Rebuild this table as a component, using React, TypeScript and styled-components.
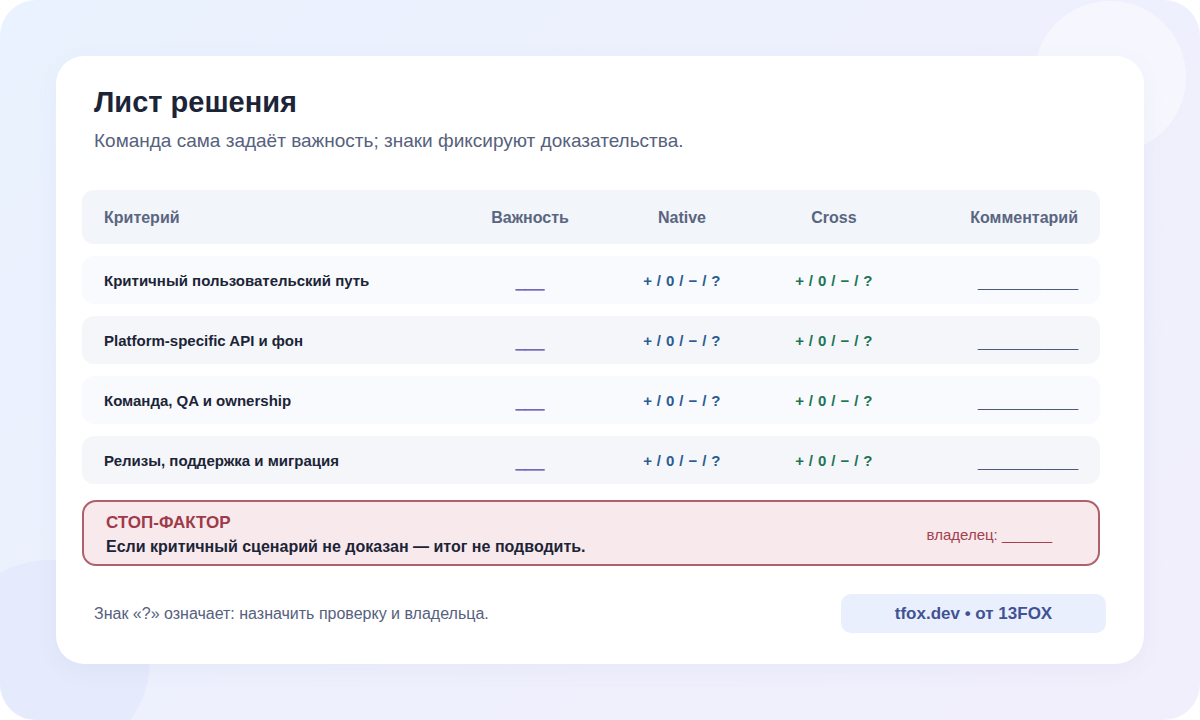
import React from "react";
import styled, { createGlobalStyle } from "styled-components";

const Global = createGlobalStyle`
  html, body { margin: 0; padding: 0; background: #ffffff; }
  body { font-family: "Liberation Sans", Arial, sans-serif; }
  * { box-sizing: border-box; }
`;

const Frame = styled.div`
  position: relative;
  width: 1200px;
  height: 720px;
  border-radius: 36px;
  overflow: hidden;
  background: linear-gradient(135deg, #e9f2fe 0%, #eef0fd 50%, #f2effc 100%);
  padding: 56px;
`;

const Blob = styled.div<{ $x: number; $y: number; $r: number; $c: string }>`
  position: absolute;
  left: ${(p) => p.$x - p.$r}px;
  top: ${(p) => p.$y - p.$r}px;
  width: ${(p) => p.$r * 2}px;
  height: ${(p) => p.$r * 2}px;
  border-radius: 50%;
  background: ${(p) => p.$c};
`;

const Card = styled.div`
  position: relative;
  height: 608px;
  background: #ffffff;
  border-radius: 28px;
  padding: 29px 44px 0 26px;
  display: flex;
  flex-direction: column;
  box-shadow: 0 6px 24px rgba(80, 90, 140, 0.05);
`;

const Title = styled.h1`
  margin: 0 0 0 12px;
  font-size: 29px;
  line-height: 34px;
  font-weight: 700;
  color: #1c2437;
`;

const Subtitle = styled.p`
  margin: 11px 0 0 12px;
  font-size: 19px;
  line-height: 22px;
  color: #56617d;
`;

const Table = styled.div`
  margin-top: 38px;
  display: flex;
  flex-direction: column;
  gap: 12px;
`;

const Row = styled.div<{ $head?: boolean; $alt?: boolean }>`
  display: grid;
  grid-template-columns: 350px 152px 152px 152px 1fr;
  align-items: center;
  height: ${(p) => (p.$head ? 54 : 48)}px;
  padding: 0 22px 0 22px;
  border-radius: 12px;
  background: ${(p) => (p.$head ? "#f2f5fa" : p.$alt ? "#f4f6fa" : "#f8fafd")};
`;

const HeadCell = styled.div<{ $align?: string }>`
  font-size: 16px;
  font-weight: 700;
  color: #5a6581;
  text-align: ${(p) => p.$align || "center"};
  padding-top: 2px;
`;

const Criterion = styled.div`
  font-size: 15px;
  font-weight: 700;
  color: #1c2437;
  padding-top: 1px;
`;

const ImportanceBlank = styled.div`
  text-align: center;
  font-size: 17.5px;
  font-weight: 700;
  line-height: 20px;
  padding-top: 4px;
  color: #5549ad;
  text-shadow: 0 0.7px 0 #5549ad, 0 -0.3px 0 #5549ad;
`;

const CommentBlank = styled.div`
  text-align: right;
  font-size: 15px;
  color: #4d5a7a;
  line-height: 20px;
  padding-top: 4px;
`;

const Marks = styled.div<{ $color: string }>`
  text-align: center;
  font-size: 15px;
  font-weight: 700;
  letter-spacing: 0.4px;
  color: ${(p) => p.$color};
`;

const Stop = styled.div`
  margin-top: 16px;
  border: 2px solid #b0606c;
  background: #f8e9ec;
  border-radius: 14px;
  padding: 11px 46px 8px 22px;
  display: flex;
  align-items: center;
  justify-content: space-between;
`;

const StopText = styled.div`
  display: flex;
  flex-direction: column;
  gap: 5px;
`;

const StopTitle = styled.div`
  font-size: 17px;
  line-height: 19px;
  font-weight: 700;
  color: #9e3a4a;
`;

const StopBody = styled.div`
  font-size: 16px;
  line-height: 19px;
  font-weight: 700;
  color: #1c2437;
`;

const Owner = styled.div`
  font-size: 15px;
  color: #a4404f;
`;

const Footer = styled.div`
  margin: 28px -6px 0 12px;
  display: flex;
  align-items: center;
  justify-content: space-between;
`;

const Note = styled.div`
  font-size: 16px;
  color: #56617d;
`;

const Badge = styled.div`
  width: 265px;
  height: 39px;
  border-radius: 10px;
  background: #eaeffd;
  display: flex;
  align-items: center;
  justify-content: center;
  font-size: 17px;
  font-weight: 700;
  color: #3f5394;
`;

const rows = [
  "Критичный пользовательский путь",
  "Platform-specific API и фон",
  "Команда, QA и ownership",
  "Релизы, поддержка и миграция",
];

export default function App() {
  return (
    <>
      <Global />
      <Frame>
        <Blob $x={1110} $y={77} $r={76} $c="rgba(255,255,255,0.45)" />
        <Blob $x={50} $y={660} $r={100} $c="rgba(222,228,252,0.5)" />
        <Card>
          <Title>Лист решения</Title>
          <Subtitle>Команда сама задаёт важность; знаки фиксируют доказательства.</Subtitle>
          <Table>
            <Row $head>
              <HeadCell $align="left">Критерий</HeadCell>
              <HeadCell>Важность</HeadCell>
              <HeadCell>Native</HeadCell>
              <HeadCell>Cross</HeadCell>
              <HeadCell $align="right">Комментарий</HeadCell>
            </Row>
            {rows.map((r, i) => (
              <Row key={r} $alt={i % 2 === 1}>
                <Criterion>{r}</Criterion>
                <ImportanceBlank>___</ImportanceBlank>
                <Marks $color="#2b5c93">+ / 0 / − / ?</Marks>
                <Marks $color="#1d7555">+ / 0 / − / ?</Marks>
                <CommentBlank>____________</CommentBlank>
              </Row>
            ))}
          </Table>
          <Stop>
            <StopText>
              <StopTitle>СТОП-ФАКТОР</StopTitle>
              <StopBody>Если критичный сценарий не доказан — итог не подводить.</StopBody>
            </StopText>
            <Owner>владелец: ______</Owner>
          </Stop>
          <Footer>
            <Note>Знак «?» означает: назначить проверку и владельца.</Note>
            <Badge>tfox.dev • от 13FOX</Badge>
          </Footer>
        </Card>
      </Frame>
    </>
  );
}
